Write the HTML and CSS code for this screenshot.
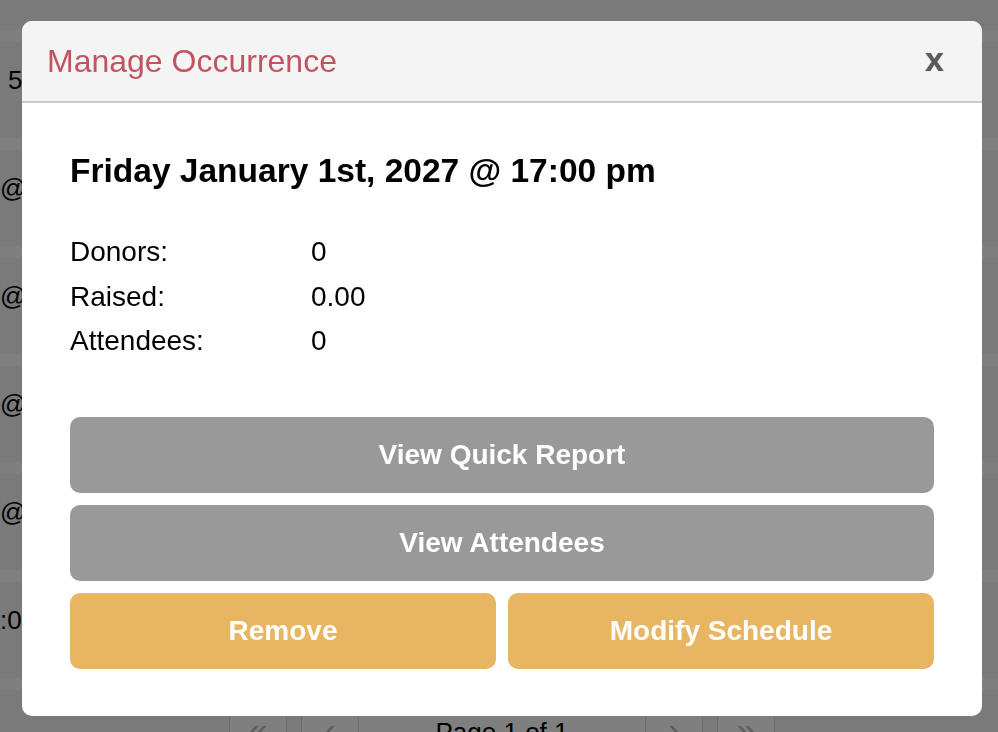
FILE: index.html
```html
<!DOCTYPE html>
<html lang="en">
<head>
    <meta charset="UTF-8">
    <meta name="viewport" content="width=device-width, initial-scale=1.0">
    <title>Manage Occurrence</title>
    <link rel="stylesheet" href="styles.css">
</head>
<body>
    <div class="page">
        <div class="row"><span class="first">5</span></div>
        <div class="row"><span class="at">@</span></div>
        <div class="row"><span class="at">@</span></div>
        <div class="row"><span class="at">@</span></div>
        <div class="row"><span class="at">@</span></div>
        <div class="row"><span class="at">:0</span></div>
        <div class="pager-wrap">
            <div class="pager">
                <span class="pg">&laquo;</span>
                <div class="pg-mid">
                    <span class="pg">&lsaquo;</span>
                    <span class="pg-label">Page 1 of 1</span>
                    <span class="pg">&rsaquo;</span>
                </div>
                <span class="pg">&raquo;</span>
            </div>
        </div>
    </div>

    <div class="overlay">
        <div class="modal">
            <div class="modal-head">
                <h1 class="modal-title">Manage Occurrence</h1>
                <span class="close">x</span>
            </div>
            <div class="modal-body">
                <h2 class="when">Friday January 1st, 2027 @ 17:00 pm</h2>
                <div class="stats">
                    <span>Donors:</span><span>0</span>
                    <span>Raised:</span><span>0.00</span>
                    <span>Attendees:</span><span>0</span>
                </div>
                <div class="actions">
                    <button class="btn grey wide">View Quick Report</button>
                    <button class="btn grey wide">View Attendees</button>
                    <button class="btn orange">Remove</button>
                    <button class="btn orange">Modify Schedule</button>
                </div>
            </div>
        </div>
    </div>
</body>
</html>
```

FILE: styles.css
```css
body {
    margin: 0;
    font-family: "Liberation Sans", Arial, sans-serif;
}
.page {
    background: #f4f4f4;
    height: 732px;
    padding-top: 30px;
    box-sizing: border-box;
    overflow: hidden;
}
.row {
    height: 108px;
    border-top: 12px solid #fff;
    box-sizing: border-box;
    padding-top: 18px;
    font-size: 26px;
    line-height: 40px;
}
.row .first {
    margin-left: 8px;
}
.pager-wrap {
    border-top: 12px solid #fff;
    padding-top: 18px;
}
.pager {
    display: flex;
    gap: 14px;
    margin-left: 229px;
    height: 52px;
}
.pg-mid {
    display: flex;
}
.pg {
    width: 58px;
    border: 1px solid #ddd;
    background: #fff;
    color: #bbb;
    font-size: 34px;
    line-height: 40px;
    text-align: center;
    box-sizing: border-box;
}
.pg-label {
    width: 286px;
    text-align: center;
    font-size: 26px;
    line-height: 48px;
    background: #fff;
}
.overlay {
    position: fixed;
    inset: 0;
    background: rgba(0, 0, 0, 0.5);
    padding: 21px 0 0 22px;
}
.modal {
    width: 960px;
    height: 695px;
    background: #fff;
    border-radius: 10px;
    overflow: hidden;
}
.modal-head {
    background: #f4f4f4;
    height: 80px;
    border-bottom: 2px solid #ccc;
    display: flex;
    align-items: center;
    justify-content: space-between;
    padding: 0 38px 0 25px;
}
.modal-title {
    margin: 0;
    font-size: 32px;
    font-weight: normal;
    color: #c1555f;
}
.close {
    font-size: 34px;
    font-weight: bold;
    color: #5a5a5a;
    text-shadow: 0 0 1px #888;
    padding-bottom: 4px;
}
.modal-body {
    padding: 41px 48px 47px;
}
.when {
    margin: 0 0 33px;
    font-size: 33.5px;
    line-height: 53px;
}
.stats {
    display: grid;
    grid-template-columns: 241px auto;
    font-size: 28px;
    line-height: 44.5px;
}
.actions {
    margin-top: 53px;
    display: grid;
    grid-template-columns: 1fr 1fr;
    gap: 12px;
}
.btn {
    height: 76px;
    border: 0;
    border-radius: 10px;
    color: #fff;
    font-family: "Liberation Sans", Arial, sans-serif;
    font-size: 28px;
    font-weight: bold;
}
.btn.wide {
    grid-column: 1 / -1;
}
.grey {
    background: #999;
}
.orange {
    background: #e8b662;
}
```
